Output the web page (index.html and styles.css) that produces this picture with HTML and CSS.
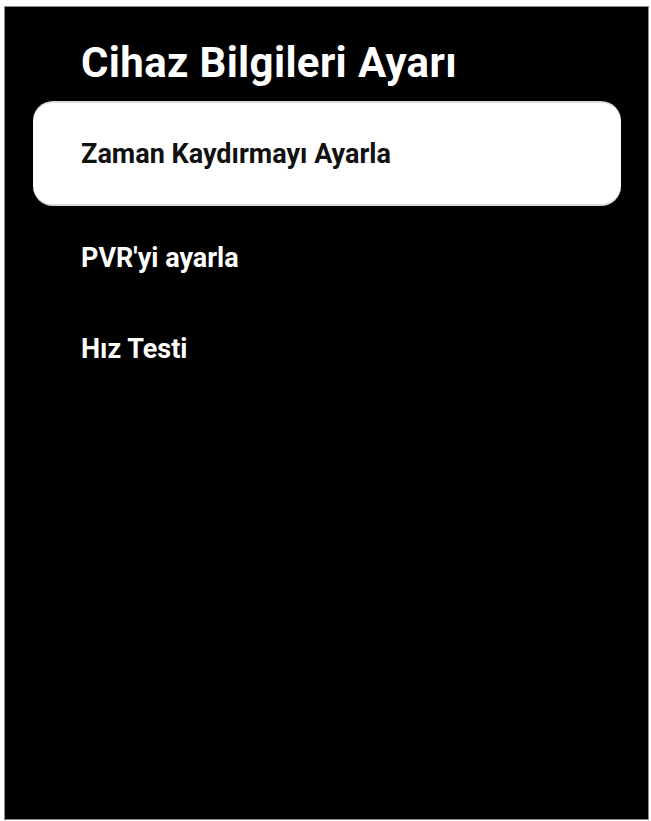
FILE: index.html
```html
<!DOCTYPE html>
<html lang="tr">
<head>
<meta charset="utf-8">
<title>Cihaz Bilgileri Ayarı</title>
<link rel="stylesheet" href="styles.css">
</head>
<body>
<div class="screen">
  <h1 class="title">Cihaz Bilgileri Ayarı</h1>
  <ul class="menu">
    <li class="item item-focused">Zaman Kaydırmayı Ayarla</li>
    <li class="item">PVR'yi ayarla</li>
    <li class="item">Hız Testi</li>
  </ul>
</div>
</body>
</html>
```

FILE: styles.css
```css
html, body {
  margin: 0;
  padding: 0;
  background: #ffffff;
}

body {
  width: 651px;
  height: 821px;
  padding: 6px 2px 1px 4px;
  box-sizing: border-box;
  font-family: Roboto, "Liberation Sans", Arial, sans-serif;
}

.screen {
  height: 100%;
  box-sizing: border-box;
  background: #000000;
  border: 1px solid #8c8c8c;
  padding: 31px 0 0 0;
}

.title {
  margin: 0 0 13px 0;
  padding-left: 76px;
  font-size: 42px;
  line-height: 50px;
  font-weight: 700;
  letter-spacing: 0.35px;
  color: #ffffff;
}

.menu {
  list-style: none;
  margin: 0;
  padding: 0;
  display: flex;
  flex-direction: column;
}

.item {
  height: 91px;
  display: flex;
  align-items: center;
  padding-left: 76px;
  font-size: 27px;
  font-weight: 700;
  color: #ffffff;
}

.item-focused {
  height: 105px;
  box-sizing: border-box;
  margin: 0 27px 6px 28px;
  padding-left: 48px;
  background: #ffffff;
  color: #111111;
  border-radius: 20px;
  border-top: 2px solid #d9d9d9;
  border-bottom: 2px solid #d9d9d9;
}
```
